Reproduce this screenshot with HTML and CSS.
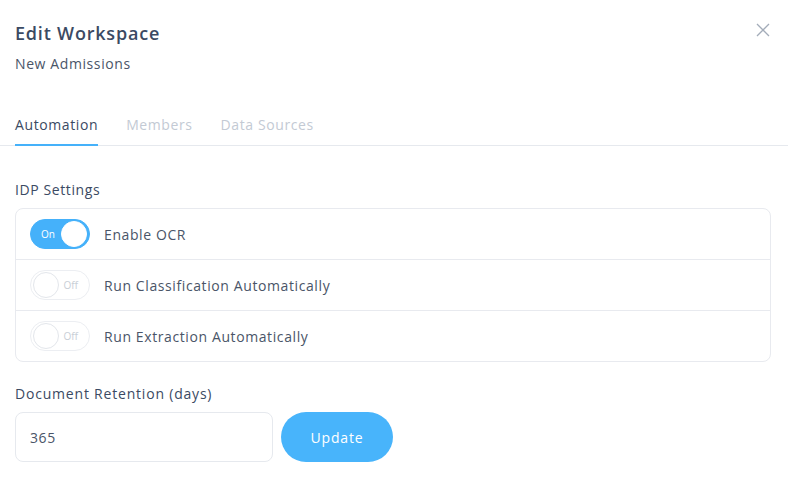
FILE: index.html
```html
<!DOCTYPE html>
<html>
<head>
  <meta charset="utf-8"/>
  <link rel="stylesheet" href="styles.css">
</head>
<body>
  <div class="modal">
    <div class="modal-header">
      <div>
        <h1 class="title">Edit Workspace</h1>
        <div class="subtitle">New Admissions</div>
      </div>
      <button class="close" aria-label="Close">
        <svg width="14" height="14" viewBox="0 0 14 14">
          <path d="M1 1 L13 13 M13 1 L1 13" stroke="#a3acb9" stroke-width="1.3" fill="none"/>
        </svg>
      </button>
    </div>

    <div class="tabs">
      <div class="tab active">Automation</div>
      <div class="tab">Members</div>
      <div class="tab">Data Sources</div>
    </div>

    <div class="content">
      <div class="section-label">IDP Settings</div>
      <div class="settings-card">
        <div class="setting-row">
          <div class="toggle on"><span class="toggle-text">On</span><span class="knob"></span></div>
          <span class="setting-name">Enable OCR</span>
        </div>
        <div class="setting-row">
          <div class="toggle"><span class="knob"></span><span class="toggle-text">Off</span></div>
          <span class="setting-name">Run Classification Automatically</span>
        </div>
        <div class="setting-row">
          <div class="toggle"><span class="knob"></span><span class="toggle-text">Off</span></div>
          <span class="setting-name">Run Extraction Automatically</span>
        </div>
      </div>

      <div class="section-label retention-label">Document Retention (days)</div>
      <div class="retention-row">
        <input class="input" type="text" value="365">
        <button class="btn-primary">Update</button>
      </div>
    </div>
  </div>
</body>
</html>
```

FILE: styles.css
```css
body {
  margin: 0;
  font-family: "Open Sans", "Noto Sans", sans-serif;
  letter-spacing: 0.6px;
  background: #fff;
  color: #4a5568;
}
.modal {
  width: 788px;
}
.modal-header {
  display: flex;
  justify-content: space-between;
  padding: 21px 18px 0 15px;
}
.title {
  margin: 0;
  font-size: 18px;
  line-height: 24px;
  font-weight: 600;
  letter-spacing: 0.8px;
  color: #3b4a63;
}
.subtitle {
  margin-top: 9px;
  font-size: 14px;
  line-height: 20px;
  color: #4a5568;
}
.close {
  border: none;
  background: none;
  padding: 0;
  margin-top: 2px;
  width: 14px;
  height: 14px;
  cursor: pointer;
}
.tabs {
  display: flex;
  gap: 28px;
  padding: 0 15px;
  margin-top: 41px;
  border-bottom: 1px solid #e6e9ee;
}
.tab {
  font-size: 14px;
  line-height: 20px;
  padding-bottom: 9px;
  border-bottom: 2px solid transparent;
  margin-bottom: -1px;
  color: #c3cad4;
}
.tab.active {
  color: #3b4a63;
  border-bottom-color: #45b1fa;
}
.content {
  padding: 0 17px 0 15px;
}
.section-label {
  margin-top: 34px;
  font-size: 14px;
  line-height: 20px;
  font-weight: 500;
  color: #3b4a63;
}
.settings-card {
  margin-top: 8px;
  border: 1px solid #e8eaef;
  border-radius: 8px;
}
.setting-row {
  display: flex;
  align-items: center;
  gap: 14px;
  height: 50px;
  padding-left: 14px;
  border-top: 1px solid #e8eaef;
}
.setting-row:first-child {
  border-top: none;
}
.setting-name {
  font-size: 14px;
  color: #4a5568;
}
.toggle {
  display: flex;
  align-items: center;
  justify-content: space-between;
  box-sizing: border-box;
  width: 60px;
  height: 30px;
  padding: 0 2px;
  border-radius: 15px;
  border: 1px solid #eceef2;
  background: #fff;
  letter-spacing: 0;
}
.toggle .knob {
  width: 24px;
  height: 24px;
  border-radius: 50%;
  border: 1px solid #e3e6eb;
  background: #fff;
}
.toggle-text {
  font-size: 10px;
  color: #c8ced6;
  padding: 0 9px 0 0;
}
.toggle.on {
  background: #45b1fa;
  border-color: #45b1fa;
}
.toggle.on .knob {
  border-color: #fff;
}
.toggle.on .toggle-text {
  color: #fff;
  padding: 0 0 0 8px;
}
.retention-label {
  margin-top: 22px;
  letter-spacing: 0.8px;
}
.retention-row {
  display: flex;
  gap: 8px;
  margin-top: 8px;
}
.input {
  box-sizing: border-box;
  width: 258px;
  height: 50px;
  padding: 0 14px;
  border: 1px solid #e6e9ee;
  border-radius: 8px;
  font-family: inherit;
  font-size: 14px;
  letter-spacing: 0.6px;
  color: #4a5568;
  outline: none;
}
.btn-primary {
  width: 112px;
  height: 50px;
  border: none;
  border-radius: 25px;
  background: #48b4fb;
  color: #fff;
  font-family: inherit;
  font-size: 14px;
  font-weight: 500;
  letter-spacing: 0.8px;
}
```
